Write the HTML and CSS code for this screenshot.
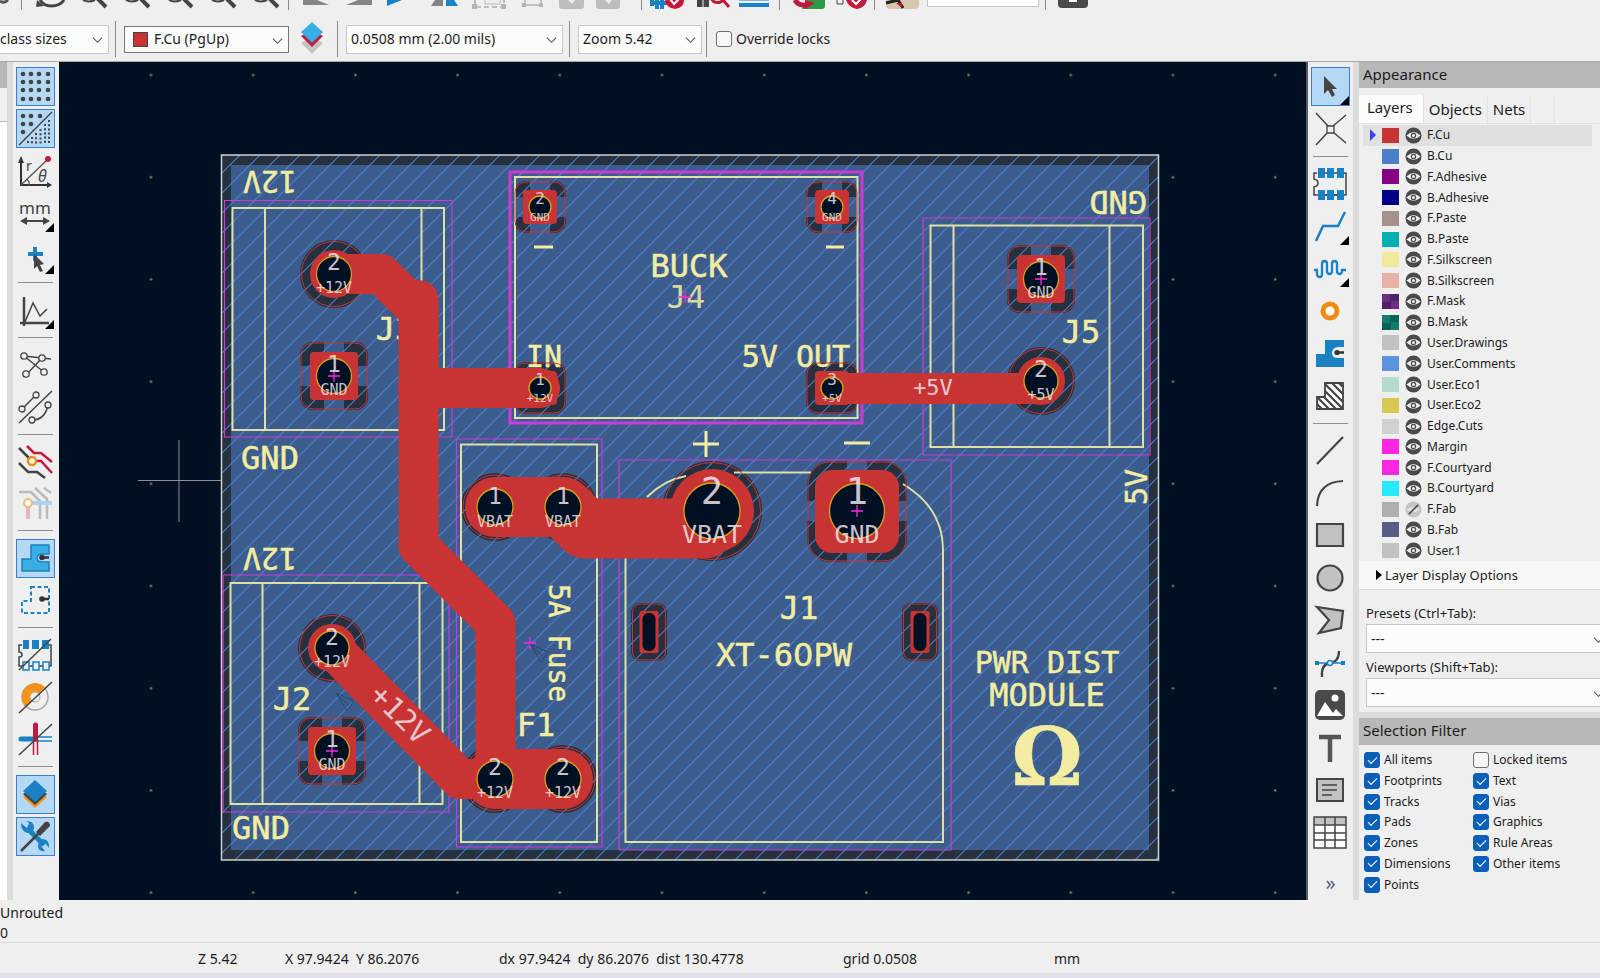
FILE: index.html
```html
<!DOCTYPE html>
<html lang="en">
<head>
<meta charset="utf-8">
<title>PCB Editor</title>
<link rel="stylesheet" href="styles.css">
</head>
<body>
<svg class="defs" aria-hidden="true">
  <defs>
    <symbol id="eye" viewBox="0 0 18 18"><circle cx="9" cy="9" r="8.5" fill="#4a4a4a"/><path d="M1.500 9Q9 1.500 16.500 9Q9 16 1.500 9Z" fill="#f2f2f2"/><circle cx="9" cy="9" r="2.900" fill="#4a4a4a"/><circle cx="9" cy="9" r="1.600" fill="#f2f2f2"/></symbol>
    <symbol id="eye-off" viewBox="0 0 18 18"><circle cx="9" cy="9" r="8.500" fill="#c4c4c4"/><path d="M2 9Q9 3 16 9Q9 15 2 9Z" fill="#e0e0e0"/><path d="M4 14L14 4" stroke="#444" stroke-width="1.600"/></symbol>
    <symbol id="chev" viewBox="0 0 12 8"><path d="M1 1.500L6 6.500L11 1.500" fill="none" stroke="#555" stroke-width="1.200"/></symbol>
    <symbol id="mag" viewBox="0 0 43 10"><path d="M12 0Q17 3 24 0" fill="none" stroke="#444" stroke-width="2"/><path d="M26 -2L35 7" stroke="#444" stroke-width="4"/></symbol>
    <symbol id="more" viewBox="0 0 9 9"><path d="M9 0V9H0Z" fill="#000"/></symbol>
  </defs>
</svg>

<header class="toolbars">
  <div class="bar-top">
    <button class="cut first" aria-label="Redo"><svg width="20" height="10"><path d="M0 1Q4 4 8 0" fill="none" stroke="#555" stroke-width="3"/></svg></button>
    <i class="vsep"></i>
    <button class="cut" aria-label="Refresh"><svg width="43" height="10"><path d="M12 0Q16 6 23 6Q32 6 36 0" fill="none" stroke="#444" stroke-width="3"/><path d="M8 7L9 0L16 6Z" fill="#444"/></svg></button>
    <button class="cut" aria-label="Zoom in"><svg width="43" height="10"><use href="#mag"/></svg></button>
    <button class="cut" aria-label="Zoom out"><svg width="43" height="10"><use href="#mag"/></svg></button>
    <button class="cut" aria-label="Zoom to fit"><svg width="43" height="10"><use href="#mag"/></svg></button>
    <button class="cut" aria-label="Zoom to objects"><svg width="43" height="10"><use href="#mag"/></svg></button>
    <button class="cut" aria-label="Zoom to selection"><svg width="43" height="10"><use href="#mag"/></svg></button>
    <i class="vsep"></i>
    <button class="cut" aria-label="Rotate left"><svg width="43" height="10"><path d="M8 0H22L34 5H8Z" fill="#858585"/></svg></button>
    <button class="cut" aria-label="Rotate right"><svg width="43" height="10"><path d="M34 0H20L8 5H34Z" fill="#858585"/></svg></button>
    <button class="cut" aria-label="Mirror"><svg width="43" height="10"><path d="M6 0H21L6 6Z" fill="#1a81c4"/></svg></button>
    <button class="cut" aria-label="Flip"><svg width="43" height="10"><path d="M11 0H19V6H7Z" fill="#858585"/><path d="M22 0H30L34 6H22Z" fill="#1a81c4"/></svg></button>
    <button class="cut" aria-label="Group"><svg width="43" height="10"><path d="M8 0V7H37V0" fill="none" stroke="#aaa" stroke-width="1.500" stroke-dasharray="5 3"/><path d="M18 0V4H33V0" fill="none" stroke="#bbb"/><path d="M5 4h5v5h-5zM34 4h5v5h-5z" fill="#b5b5b5"/></svg></button>
    <button class="cut" aria-label="Ungroup"><svg width="43" height="10"><path d="M15 0V5H31V0" fill="none" stroke="#b5b5b5" stroke-width="1.500"/><path d="M12 3h4v4h-4zM29 3h4v4h-4z" fill="#b5b5b5"/></svg></button>
    <button class="cut" aria-label="Lock"><svg width="43" height="10"><path d="M6 0H31V6Q31 9 28 9H9Q6 9 6 6Z" fill="#bdbdbd"/><path d="M15 0H22L19 4Z" fill="#eee"/></svg></button>
    <button class="cut" aria-label="Unlock"><svg width="43" height="10"><path d="M0 0H24V6Q24 9 21 9H3Q0 9 0 6Z" fill="#bdbdbd"/><path d="M9 0H16L13 4Z" fill="#eee"/></svg></button>
    <i class="vsep"></i>
    <button class="cut" aria-label="Footprint checker"><svg width="43" height="10"><path d="M4 0V6M9 0V9M14 0V9M4 3H34" stroke="#1a81c4" stroke-width="4"/><path d="M17 0H36Q36 8 27 9Q18 8 17 0Z" fill="#c31a3b"/><path d="M22 -1L26 4L33 -3" fill="none" stroke="#fff" stroke-width="2"/></svg></button>
    <button class="cut" aria-label="Find footprint"><svg width="43" height="10"><path d="M6 1H18M6 5H18" stroke="#444" stroke-width="4"/><path d="M12 0V8" stroke="#efefef"/><path d="M20 -2A7 7 0 0 0 32 0L38 7" fill="none" stroke="#c31a3b" stroke-width="3"/></svg></button>
    <button class="cut" aria-label="Net inspector"><svg width="43" height="10"><path d="M5 0H35" stroke="#1a81c4" stroke-width="1"/><path d="M5 5H35" stroke="#1a81c4" stroke-width="4"/></svg></button>
    <i class="vsep"></i>
    <button class="cut" aria-label="Update from schematic"><svg width="43" height="10"><path d="M20 0H39V6Q39 9 36 9H16Z" fill="#2f9a44"/><path d="M9 0Q12 6 20 5" fill="none" stroke="#c31a3b" stroke-width="5"/><path d="M19 0L29 3L19 9Z" fill="#c31a3b"/></svg></button>
    <button class="cut" aria-label="Design rules check"><svg width="43" height="10"><path d="M8 0V4H14V0" fill="none" stroke="#444"/><path d="M17 0Q20 8 28 9Q36 8 38 0Z" fill="#c31a3b"/><path d="M23 0L27 4L34 -3" fill="none" stroke="#fff" stroke-width="2"/></svg></button>
    <i class="vsep"></i>
    <button class="cut" aria-label="Scripting"><svg width="43" height="10"><path d="M5 0H38V5Q38 9 34 9H9Q5 9 5 5Z" fill="#d6c8aa"/><path d="M5 3L17 0L22 8" fill="none" stroke="#222" stroke-width="3"/><path d="M15 3L21 8V3Z" fill="#c31a3b"/></svg></button>
    <input class="cut-input" type="text" aria-label="Search">
    <i class="vsep"></i>
    <button class="cut" aria-label="Console"><svg width="43" height="10"><path d="M6 0H36V4Q36 8 32 8H10Q6 8 6 4Z" fill="#4a4a4a"/><path d="M17 1H25" stroke="#fff" stroke-width="2"/></svg></button>
  </div>
  <div class="bar-opts">
    <div class="combo c-track"><select aria-label="Track width"><option>class sizes</option></select><svg class="chev"><use href="#chev"/></svg></div>
    <i class="osep"></i>
    <div class="combo c-layer"><span class="layer-chip"></span><select aria-label="Active layer"><option>F.Cu (PgUp)</option></select><svg class="chev"><use href="#chev"/></svg></div>
    <button class="layer-pair" aria-label="Layer pair"><svg width="26" height="34" viewBox="0 0 26 34"><path d="M2 21L13 32L24 21L13 14Z" fill="#c4c4c4"/><path d="M2 14L13 25L24 14L13 8Z" fill="#c31a3b"/><path d="M13 0L24 10L13 21L2 10Z" fill="#38aee4"/></svg></button>
    <i class="osep"></i>
    <div class="combo c-grid"><select aria-label="Grid"><option>0.0508 mm (2.00 mils)</option></select><svg class="chev"><use href="#chev"/></svg></div>
    <i class="osep"></i>
    <div class="combo c-zoom"><select aria-label="Zoom"><option>Zoom 5.42</option></select><svg class="chev"><use href="#chev"/></svg></div>
    <i class="osep"></i>
    <label class="check lock"><input type="checkbox">Override locks</label>
  </div>
</header>

<main class="work">
  <aside class="left-pane"><div class="lp-head"></div><div class="lp-sub"></div></aside>
  <div class="splitter"></div>
  <nav class="tools left" aria-label="Display options">
    <button class="tool on" aria-label="Show grid"><svg viewBox="0 0 37 37"><g fill="#444"><g id="dotrow"><circle cx="6" cy="6" r="2.300"/><circle cx="14" cy="6" r="2.300"/><circle cx="22" cy="6" r="2.300"/><circle cx="31" cy="6" r="2.300"/></g><use href="#dotrow" y="8"/><use href="#dotrow" y="16"/><use href="#dotrow" y="25"/></g></svg></button>
    <button class="tool on" aria-label="Grid overrides"><svg viewBox="0 0 37 37"><g fill="#444"><circle cx="6" cy="6" r="2.300"/><circle cx="14" cy="6" r="2.300"/><circle cx="23" cy="6" r="2.300"/><circle cx="6" cy="14" r="2.300"/><circle cx="14" cy="14" r="2.300"/><circle cx="6" cy="22" r="2.300"/></g><path d="M2 35L35 2" stroke="#444" stroke-width="1.500"/><g stroke="#444" stroke-width="2" stroke-dasharray="2 2.200"><path d="M32 10V34M28 14V34M23.500 19V34M19 23V34M15 27V34M11 31V34"/></g></svg></button>
    <button class="tool" aria-label="Polar coordinates"><svg viewBox="0 0 37 37"><path d="M4 8V32H32" fill="none" stroke="#333" stroke-width="2"/><path d="M1 10L4 3L7 10ZM30 29L35 32L30 35Z" fill="#333"/><path d="M4 32L30 7M9 26Q13 28 12 32" stroke="#555" stroke-width="1.300" fill="none"/><circle cx="31" cy="6" r="3" fill="#c31a3b"/><text x="9" y="18" class="ic-t">r</text><text x="21" y="29" class="ic-t it">θ</text></svg></button>
    <button class="tool" aria-label="Millimetres"><svg viewBox="0 0 37 37"><text x="18" y="19" text-anchor="middle" class="ic-mm">mm</text><path d="M7 26H30" stroke="#444" stroke-width="2"/><path d="M3 26L10 22V30ZM33 26L26 22V30Z" fill="#444"/></svg><svg class="more"><use href="#more"/></svg></button>
    <button class="tool" aria-label="Cursor shape"><svg viewBox="0 0 37 37"><path d="M18 10V24M11 17H26" stroke="#1a81c4" stroke-width="4"/><path d="M17 17V32L20 29L23 35L26 34L23 28L27 27Z" fill="#444"/></svg><svg class="more"><use href="#more"/></svg></button>
    <i class="hsep"></i>
    <button class="tool" aria-label="Axes"><svg viewBox="0 0 37 37"><path d="M7 5V34M3 31H32" stroke="#444" stroke-width="2.500"/><path d="M8 30L16 11L23 24L30 17" fill="none" stroke="#444" stroke-width="1.500"/></svg><svg class="more"><use href="#more"/></svg></button>
    <i class="hsep"></i>
    <button class="tool" aria-label="Ratsnest"><svg viewBox="0 0 37 37"><path d="M7 10L28 27M9 29L25 12M7 10L34 13" stroke="#444" stroke-width="1.500"/><g fill="#efefef" stroke="#444" stroke-width="1.300"><circle cx="7" cy="10" r="3.200"/><circle cx="25" cy="12" r="3.200"/><circle cx="27" cy="26" r="3.200"/><circle cx="9" cy="28" r="3.200"/></g></svg></button>
    <button class="tool" aria-label="Curved ratsnest"><svg viewBox="0 0 37 37"><path d="M2 35L35 3M5 21L19 7M15 32Q28 32 31 17" fill="none" stroke="#444" stroke-width="1.500"/><g fill="#efefef" stroke="#444" stroke-width="1.300"><circle cx="19" cy="7" r="3"/><circle cx="5" cy="21" r="3"/><circle cx="31" cy="17" r="3"/><circle cx="15" cy="32" r="3"/></g></svg></button>
    <i class="hsep"></i>
    <button class="tool" aria-label="Net highlight"><svg viewBox="0 0 37 37"><path d="M2 5L14 17M2 20L11 29H20L28 35" fill="none" stroke="#444" stroke-width="2.500"/><path d="M10 3L17 10H24L35 19M17 18H24L35 30" fill="none" stroke="#c31a3b" stroke-width="2.500"/><circle cx="15" cy="18" r="4" fill="#fff" stroke="#f08c12" stroke-width="2.500"/></svg></button>
    <button class="tool" aria-label="Net colors"><svg viewBox="0 0 37 37" opacity=".5"><path d="M2 7H14L23 16V34M18 3L30 14V34M27 3L34 8" fill="none" stroke="#888" stroke-width="2.500"/><path d="M14 18H35" stroke="#6bb8ea" stroke-width="4"/><path d="M11 20V34" stroke="#e77a8e" stroke-width="4"/><circle cx="11" cy="18" r="4" fill="#fff" stroke="#f08c12" stroke-width="2"/></svg></button>
    <i class="hsep"></i>
    <button class="tool on" aria-label="Zone fills"><svg viewBox="0 0 37 37"><path d="M14 5H32V14H26Q20 14 20 18Q20 22 26 22H32V31H5V19H14Z" fill="#38aee4" stroke="#1a81c4" stroke-width="1.500"/><path d="M25 17.500H32" stroke="#333" stroke-width="2.500"/><circle cx="25" cy="17.500" r="2.800" fill="#333"/></svg></button>
    <button class="tool" aria-label="Zone outlines"><svg viewBox="0 0 37 37"><path d="M14 5H32V31H5V19H14Z" fill="none" stroke="#1a81c4" stroke-width="2" stroke-dasharray="4 2.500"/><path d="M25 17H32" stroke="#333" stroke-width="2.500"/><circle cx="25" cy="17" r="2.800" fill="#333"/></svg></button>
    <i class="hsep"></i>
    <button class="tool" aria-label="Pads sketch"><svg viewBox="0 0 37 37"><path d="M5 8H2V15Q5 15 5 18Q5 20 2 20V29H34V8H31" fill="none" stroke="#444" stroke-width="1.500"/><path d="M6 3h6v9h-6zM15 3h7v9h-7zM25 3h7v9h-7z" fill="#1a81c4"/><path d="M6 25h6v8h-6zM16 25h6v8h-6zM26 25h6v8h-6z" fill="#efefef" stroke="#1a81c4" stroke-width="1.500"/><path d="M2 33L34 2" stroke="#444" stroke-width="1.500"/></svg></button>
    <button class="tool" aria-label="Vias sketch"><svg viewBox="0 0 37 37"><circle cx="18" cy="18" r="13" fill="#efefef" stroke="#aaa" stroke-width="1.500"/><path d="M9 28A13.500 13.500 0 0 1 28 8Z" fill="#f7931a"/><circle cx="18" cy="18" r="5" fill="#efefef" stroke="#aaa"/><path d="M2 34L35 3" stroke="#444" stroke-width="1.500"/></svg></button>
    <button class="tool" aria-label="Tracks sketch"><svg viewBox="0 0 37 37"><path d="M4 18H18" stroke="#1a81c4" stroke-width="5" stroke-linecap="round"/><path d="M18 16H35M18 20H35" stroke="#1a81c4" stroke-width="1.500"/><path d="M18.500 4V18" stroke="#c31a3b" stroke-width="5" stroke-linecap="round"/><path d="M16.500 18V34M20.500 18V34" stroke="#c31a3b" stroke-width="1.500"/><path d="M2 34L35 3" stroke="#444" stroke-width="1.500"/></svg></button>
    <i class="hsep"></i>
    <button class="tool on" aria-label="Layers manager"><svg viewBox="0 0 37 37"><path d="M6 21L18 32L30 21L18 14Z" fill="#f7931a"/><path d="M6 18L18 29L30 18L18 10Z" fill="#444"/><path d="M18 4L30 15L18 26L6 15Z" fill="#1a81c4"/></svg></button>
    <button class="tool on" aria-label="Properties manager"><svg viewBox="0 0 37 37"><path d="M12 12L27 27" stroke="#1a81c4" stroke-width="5"/><path d="M4 5L10 10L12 5L9 3Q17 3 17 9Q17 15 11 15Q4 14 4 5ZM32 30L28 25L24 28L28 33Q21 34 21 28Q21 22 26 21Q33 22 32 30Z" fill="#1a81c4"/><path d="M4 33L22 15" stroke="#444" stroke-width="2.500"/><path d="M19 14L28 4Q33 3 33 8L23 18Z" fill="#444"/></svg></button>
  </nav>

  <section class="canvas" aria-label="Board">
    <svg viewBox="59 62 1247 838">
      <defs>
        <pattern id="grid" x="100" y="24" width="102.200" height="102.200" patternUnits="userSpaceOnUse"><circle cx="51" cy="51" r="1.200" fill="#9a8560"/></pattern>
        <pattern id="hatch" x="15" y="0" width="20" height="20" patternUnits="userSpaceOnUse"><path d="M-1 21L21 -1M-1 1L1 -1M19 21L21 19" stroke="#4c80c8" stroke-width="1.100"/></pattern>
        <g id="clr-sq"><rect x="-34" y="-34" width="68" height="68" rx="13" fill="#26303e"/><path d="M-34 0H34M0 -34V34" stroke="#3b5c8c" stroke-width="20"/></g>
        <g id="pad-sq"><rect x="-33" y="-33" width="66" height="66" rx="12" class="ring"/><rect x="-24" y="-24" width="48" height="48" rx="4" class="cu"/><circle r="17.500" class="hole"/></g>
        <g id="pad-rd"><circle r="32.500" class="ring"/><circle r="24" class="cu"/></g>
        <g id="clr-sm"><rect x="-26" y="-26" width="52" height="52" rx="12" fill="#26303e"/></g>
        <g id="clr-sm-t"><use href="#clr-sm"/><path d="M-26 0H26M0 -26V26" stroke="#3b5c8c" stroke-width="20"/></g>
        <g id="pad-sm"><rect x="-25" y="-25" width="50" height="50" rx="11" class="ring"/><rect x="-17" y="-17" width="34" height="34" rx="4" class="cu"/><circle r="11" class="hole"/></g>
        <g id="slot"><rect x="-9.500" y="-21" width="19" height="42" rx="2" class="cu"/><rect x="-6.500" y="-19" width="13" height="38" rx="6" fill="#001023"/><rect x="-16.500" y="-28" width="33" height="56" rx="8" class="ring"/></g>
        <path id="cross" d="M-6 0H6M0 -6V6" class="mark"/>
        <path id="ghost" d="M0 0L18 8L11 18ZM0 0L12 12" class="ghost"/>
      </defs>
      <rect x="59" y="62" width="1247" height="838" fill="url(#grid)"/>
      <path d="M138 480.500H222M179 440V522" stroke="#8f9097" stroke-width="1"/>

      <rect x="221.500" y="155" width="937" height="705" fill="#26303e"/>
      <rect x="231" y="165" width="918" height="685" fill="#3b5c8c"/>

      <g class="clear">
        <circle cx="334" cy="274" r="34"/><circle cx="332" cy="648" r="34"/>
        <circle cx="1041" cy="381" r="34"/><circle cx="712" cy="511" r="50"/>
        <circle cx="495" cy="507" r="34"/><circle cx="563" cy="507" r="34"/>
        <circle cx="495" cy="779" r="34"/><circle cx="563" cy="779" r="34"/>
        <rect x="807" y="461" width="100" height="101" rx="24"/>
        <rect x="631" y="603" width="36" height="58" rx="9"/><rect x="902" y="603" width="36" height="58" rx="9"/>
      </g>
      <path d="M857 461V562M807 511H907" stroke="#3b5c8c" stroke-width="20"/>
      <use href="#clr-sq" x="334" y="376"/><use href="#clr-sq" x="332" y="751"/><use href="#clr-sq" x="1041" y="279"/>
      <use href="#clr-sm-t" x="540" y="207"/><use href="#clr-sm-t" x="832" y="207"/>
      <use href="#clr-sm" x="540" y="388"/><use href="#clr-sm" x="832" y="388"/>
      <rect x="222" y="155" width="937" height="705" fill="url(#hatch)"/>
      <rect x="221.500" y="155" width="937" height="705" class="edge"/>

      <g class="silk">
        <path d="M232.500 208H444V430H232.500ZM265 208V430M421.500 208V430"/>
        <path d="M230.500 583H442.500V804H230.500ZM262.500 583V804M419.500 583V804"/>
        <path d="M515 177H857.500V418H515Z"/>
        <path d="M930.500 225.500H1143V447H930.500ZM953.500 225.500V447M1109.500 225.500V447"/>
        <path d="M461 444.500H597V842H461Z"/>
        <path d="M647 497Q664 480 686 476M734 472.500H811M903 484Q943 508 943 550V842H625.500V550"/>
        <path d="M534 247H553M826 247H844M844 443H870M693 444H719M706 431V457" class="sign"/>
      </g>
      <g class="yard">
        <path d="M224.500 200.500H452V437H224.500ZM223 575H449V812H223ZM923 218H1150V455H923ZM456.500 439H602V847H456.500ZM619 460H951V850H619Z"/>
        <path d="M510 172H862V423H510Z" class="thick"/>
      </g>
      <g class="st">
        <text x="270" y="183" transform="rotate(180 270 183)" dy="12" class="n">12V</text>
        <text x="270" y="560" transform="rotate(180 270 560)" dy="12" class="n">12V</text>
        <text x="270" y="469">GND</text>
        <text x="261" y="839">GND</text>
        <text x="1118" y="203" transform="rotate(180 1118 203)" dy="12">GND</text>
        <text x="1136" y="487" transform="rotate(-90 1136 487)" dy="11" class="n">5V</text>
        <text x="395" y="340">J3</text>
        <text x="292" y="710">J2</text>
        <text x="1081" y="343">J5</text>
        <text x="799" y="619">J1</text>
        <text x="536" y="736">F1</text>
        <text x="544" y="367" class="n">IN</text>
        <text x="689" y="277">BUCK</text>
        <text x="686" y="308" class="thin">J4</text>
        <text x="796" y="367" class="n">5V OUT</text>
        <text x="560" y="643" transform="rotate(90 560 643)" dy="11" class="f">5A Fuse</text>
        <text x="784" y="666">XT-6<tspan class="zero">0</tspan>PW</text>
        <text x="1047" y="673" class="n">PWR DIST</text>
        <text x="1047" y="706">MODULE</text>
        <text x="1047" y="785" class="omega">Ω</text>
      </g>

      <use href="#pad-rd" x="334" y="274"/><use href="#pad-rd" x="332" y="648"/><use href="#pad-rd" x="1041" y="381"/>
      <g class="ring"><circle cx="495" cy="507" r="32"/><circle cx="563" cy="507" r="32"/><circle cx="495" cy="779" r="32"/><circle cx="563" cy="779" r="32"/><circle cx="712" cy="511" r="48.500"/><rect x="808" y="462" width="98" height="99" rx="22"/></g>
      <circle cx="712" cy="511" r="42" class="cu"/>
      <rect x="815" y="470" width="84" height="83" rx="17" class="cu"/>
      <use href="#pad-sq" x="334" y="376"/><use href="#pad-sq" x="332" y="751"/><use href="#pad-sq" x="1041" y="279"/>
      <use href="#pad-sm" x="540" y="207"/><use href="#pad-sm" x="832" y="207"/>
      <use href="#pad-sm" x="540" y="388"/><use href="#pad-sm" x="832" y="388"/>
      <use href="#slot" x="649" y="632"/><use href="#slot" x="920" y="632"/>
      <g class="track">
        <path d="M334 274H381L418.500 311" stroke-width="40"/>
        <path d="M418.500 300V546L495.500 623V779" stroke-width="40"/>
        <path d="M418 388H540" stroke-width="40"/>
        <path d="M332 648L460 779H495" stroke-width="40"/>
        <path d="M495 779H563M495 507H563L585 528.500H705" stroke-width="60"/>
        <path d="M832 388.500H1034" stroke-width="31"/>
      </g>
      <g class="hole">
        <circle cx="334" cy="274" r="17.500"/><circle cx="332" cy="648" r="17"/><circle cx="1041" cy="381" r="17"/>
        <circle cx="495" cy="507" r="18"/><circle cx="563" cy="507" r="18"/><circle cx="495" cy="779" r="18"/><circle cx="563" cy="779" r="18"/>
        <circle cx="712" cy="511" r="28"/><circle cx="857" cy="511" r="27.500"/><circle cx="540" cy="388" r="11"/><circle cx="832" cy="388" r="11"/>
      </g>
      <use href="#cross" x="334" y="376"/><use href="#cross" x="332" y="751"/><use href="#cross" x="1041" y="279"/><use href="#cross" x="857" y="511"/><use href="#cross" x="685" y="297"/><use href="#cross" x="530" y="643"/>
      <use href="#ghost" x="336" y="693"/><use href="#ghost" x="530" y="644"/>

      <g class="pn">
        <g class="num"><text x="334" y="270">2</text><text x="334" y="372">1</text><text x="332" y="645">2</text><text x="332" y="747">1</text><text x="1041" y="275">1</text><text x="1041" y="377">2</text><text x="495" y="504">1</text><text x="563" y="504">1</text><text x="495" y="775">2</text><text x="563" y="775">2</text></g>
        <g class="net"><text x="334" y="293">+12V</text><text x="334" y="395">GND</text><text x="332" y="667">+12V</text><text x="332" y="770">GND</text><text x="1041" y="298">GND</text><text x="1041" y="400">+5V</text><text x="495" y="527">VBAT</text><text x="563" y="527">VBAT</text><text x="495" y="798">+12V</text><text x="563" y="798">+12V</text></g>
        <g class="num-s"><text x="540" y="204">2</text><text x="832" y="204">4</text><text x="540" y="385">1</text><text x="832" y="385">3</text></g>
        <g class="net-s"><text x="540" y="221">GND</text><text x="832" y="221">GND</text><text x="540" y="402">+12V</text><text x="832" y="402">+5V</text></g>
        <g class="num-l"><text x="712" y="504">2</text><text x="857" y="504">1</text></g>
        <g class="net-l"><text x="712" y="543">VBAT</text><text x="857" y="543">GND</text></g>
        <text x="933" y="395" class="tr">+5V</text>
        <text x="400" y="714" transform="rotate(45 400 714)" dy="10" class="tr-l">+12V</text>
      </g>
    </svg>
  </section>

  <nav class="tools right" aria-label="Editing tools">
    <button class="tool on" aria-label="Select"><svg viewBox="0 0 37 37"><path d="M12 8V26L16 22L20 29L23 27L20 21H25Z" fill="#444"/></svg><svg class="more"><use href="#more"/></svg></button>
    <button class="tool" aria-label="Local ratsnest"><svg viewBox="0 0 37 37"><path d="M4 3L16 16M34 5L21 16M4 35L16 22M34 33L21 22" stroke="#444" stroke-width="1.500"/><path d="M15 16H22V23H15Z" fill="#efefef" stroke="#444" stroke-width="1.300"/></svg></button>
    <i class="hsep"></i>
    <button class="tool" aria-label="Place footprint"><svg viewBox="0 0 37 37"><path d="M5 8H2V14Q6 15 6 18Q6 21 2 22V30H34V8H31" fill="none" stroke="#444" stroke-width="1.500"/><path d="M12 8H16M22 8H26M12 30H16M22 30H26" stroke="#444" stroke-width="1.500"/><path d="M6 3h7v10h-7zM15 3h7v10h-7zM25 3h7v10h-7zM6 25h7v10h-7zM15 25h7v10h-7zM25 25h7v10h-7z" fill="#1a81c4"/></svg></button>
    <button class="tool" aria-label="Route track"><svg viewBox="0 0 37 37"><path d="M4 33L11 18H26L33 4" fill="none" stroke="#1a81c4" stroke-width="2.500"/></svg><svg class="more"><use href="#more"/></svg></button>
    <button class="tool" aria-label="Tune length"><svg viewBox="0 0 37 37"><path d="M2 20H5V24Q5 27 8 27Q10 27 10 24V14Q10 11 12.500 11Q15 11 15 14V21Q15 24 17.500 24Q20 24 20 21V14Q20 11 22.500 11Q25 11 25 14V21Q25 24 28 24Q30 24 30 20H34" fill="none" stroke="#1a81c4" stroke-width="2.300"/></svg><svg class="more"><use href="#more"/></svg></button>
    <button class="tool" aria-label="Place via"><svg viewBox="0 0 37 37"><circle cx="18" cy="18" r="7" fill="#fff" stroke="#f08c12" stroke-width="5"/></svg></button>
    <button class="tool" aria-label="Add zone"><svg viewBox="0 0 37 37"><path d="M13 5H32V12H26Q20 13 20 18Q20 23 26 23H32V32H4V19H13Z" fill="#1a81c4"/><path d="M25 17.500H32" stroke="#333" stroke-width="2.500"/><circle cx="25" cy="17.500" r="2.600" fill="#333"/></svg></button>
    <button class="tool" aria-label="Rule area"><svg viewBox="0 0 37 37"><path d="M13 5H31V31H5V19H13Z" fill="#fff" stroke="#444" stroke-width="1.800"/><path d="M13 6L31 24M13 13L31 31M20 5L31 16M12 19L24 31M27 5L31 9M5 19L17 31M5 26L10 31" stroke="#444" stroke-width="2.200"/></svg></button>
    <i class="hsep"></i>
    <button class="tool" aria-label="Line"><svg viewBox="0 0 37 37"><path d="M5 32L31 5" stroke="#444" stroke-width="2.200"/></svg></button>
    <button class="tool" aria-label="Arc"><svg viewBox="0 0 37 37"><path d="M5 31Q6 7 31 6" fill="none" stroke="#444" stroke-width="2.200"/></svg></button>
    <button class="tool" aria-label="Rectangle"><svg viewBox="0 0 37 37"><path d="M5 7H31V29H5Z" fill="#c2c2c2" stroke="#444" stroke-width="2.200"/></svg></button>
    <button class="tool" aria-label="Circle"><svg viewBox="0 0 37 37"><circle cx="18" cy="18" r="12.500" fill="#c2c2c2" stroke="#444" stroke-width="2.200"/></svg></button>
    <button class="tool" aria-label="Polygon"><svg viewBox="0 0 37 37"><path d="M5 5L31 9L29 26L7 31L17 18Z" fill="#c2c2c2" stroke="#444" stroke-width="2.200"/></svg></button>
    <button class="tool" aria-label="Bezier"><svg viewBox="0 0 37 37"><path d="M10 32Q9 19 18 18Q27 17 27 6" fill="none" stroke="#444" stroke-width="2.300"/><path d="M5 18H31" stroke="#1a81c4" stroke-width="1.500"/><path d="M3 16h4v4h-4zM29 16h4v4h-4z" fill="#1a81c4"/><circle cx="18" cy="18" r="2.500" fill="#fff" stroke="#1a81c4" stroke-width="1.500"/></svg></button>
    <button class="tool" aria-label="Image"><svg viewBox="0 0 37 37"><rect x="3" y="3" width="30" height="30" rx="5" fill="#4a4a4a"/><path d="M5 29L13 15L21 26L24 22L31 29Z" fill="#fff"/><circle cx="23" cy="11" r="3.500" fill="#fff"/></svg></button>
    <button class="tool" aria-label="Text"><svg viewBox="0 0 37 37"><path d="M7 8H29M18 8V33" stroke="#555" stroke-width="4.500"/></svg></button>
    <button class="tool" aria-label="Text box"><svg viewBox="0 0 37 37"><path d="M5 7H31V29H5Z" fill="#c2c2c2" stroke="#444" stroke-width="2"/><path d="M10 13H25M10 18H25M10 23H20" stroke="#444" stroke-width="1.500"/></svg></button>
    <button class="tool" aria-label="Table"><svg viewBox="0 0 37 37"><path d="M2 3H34V34H2Z" fill="#fff"/><path d="M2 3H34V11H2Z" fill="#c2c2c2"/><path d="M2 3H34V34H2ZM2 11H34M2 19H34M2 26H34M13 3V34M23 3V34" fill="none" stroke="#444" stroke-width="1.500"/></svg></button>
    <button class="overflow" aria-label="More tools">»</button>
  </nav>
  <div class="splitter"></div>

  <aside class="panel">
    <h2>Appearance</h2>
    <div class="tabs" role="tablist"><button role="tab" aria-selected="true">Layers</button><button role="tab">Objects</button><button role="tab">Nets</button><span></span></div>
    <ul class="layers">
      <li class="sel"><button class="sw l1" aria-label="F.Cu color"></button><svg><use href="#eye"/></svg>F.Cu</li>
      <li><button class="sw l2" aria-label="B.Cu color"></button><svg><use href="#eye"/></svg>B.Cu</li>
      <li><button class="sw l3" aria-label="F.Adhesive color"></button><svg><use href="#eye"/></svg>F.Adhesive</li>
      <li><button class="sw l4" aria-label="B.Adhesive color"></button><svg><use href="#eye"/></svg>B.Adhesive</li>
      <li><button class="sw l5" aria-label="F.Paste color"></button><svg><use href="#eye"/></svg>F.Paste</li>
      <li><button class="sw l6" aria-label="B.Paste color"></button><svg><use href="#eye"/></svg>B.Paste</li>
      <li><button class="sw l7" aria-label="F.Silkscreen color"></button><svg><use href="#eye"/></svg>F.Silkscreen</li>
      <li><button class="sw l8" aria-label="B.Silkscreen color"></button><svg><use href="#eye"/></svg>B.Silkscreen</li>
      <li><button class="sw l9" aria-label="F.Mask color"></button><svg><use href="#eye"/></svg>F.Mask</li>
      <li><button class="sw l10" aria-label="B.Mask color"></button><svg><use href="#eye"/></svg>B.Mask</li>
      <li><button class="sw l11" aria-label="User.Drawings color"></button><svg><use href="#eye"/></svg>User.Drawings</li>
      <li><button class="sw l12" aria-label="User.Comments color"></button><svg><use href="#eye"/></svg>User.Comments</li>
      <li><button class="sw l13" aria-label="User.Eco1 color"></button><svg><use href="#eye"/></svg>User.Eco1</li>
      <li><button class="sw l14" aria-label="User.Eco2 color"></button><svg><use href="#eye"/></svg>User.Eco2</li>
      <li><button class="sw l15" aria-label="Edge.Cuts color"></button><svg><use href="#eye"/></svg>Edge.Cuts</li>
      <li><button class="sw l16" aria-label="Margin color"></button><svg><use href="#eye"/></svg>Margin</li>
      <li><button class="sw l16" aria-label="F.Courtyard color"></button><svg><use href="#eye"/></svg>F.Courtyard</li>
      <li><button class="sw l18" aria-label="B.Courtyard color"></button><svg><use href="#eye"/></svg>B.Courtyard</li>
      <li><button class="sw l19" aria-label="F.Fab color"></button><svg><use href="#eye-off"/></svg>F.Fab</li>
      <li><button class="sw l20" aria-label="B.Fab color"></button><svg><use href="#eye"/></svg>B.Fab</li>
      <li><button class="sw l11" aria-label="User.1 color"></button><svg><use href="#eye"/></svg>User.1</li>
    </ul>
    <button class="disclose"><svg width="6" height="10"><path d="M0 0L6 5L0 10Z"/></svg>Layer Display Options</button>
    <div class="fields">
      <label for="presets">Presets (Ctrl+Tab):</label>
      <div class="combo wide"><select id="presets"><option>---</option></select><svg class="chev"><use href="#chev"/></svg></div>
      <label for="views">Viewports (Shift+Tab):</label>
      <div class="combo wide"><select id="views"><option>---</option></select><svg class="chev"><use href="#chev"/></svg></div>
    </div>
    <h2 class="sf">Selection Filter</h2>
    <div class="filter">
      <label class="check"><input type="checkbox" checked>All items</label><label class="check"><input type="checkbox">Locked items</label>
      <label class="check"><input type="checkbox" checked>Footprints</label><label class="check"><input type="checkbox" checked>Text</label>
      <label class="check"><input type="checkbox" checked>Tracks</label><label class="check"><input type="checkbox" checked>Vias</label>
      <label class="check"><input type="checkbox" checked>Pads</label><label class="check"><input type="checkbox" checked>Graphics</label>
      <label class="check"><input type="checkbox" checked>Zones</label><label class="check"><input type="checkbox" checked>Rule Areas</label>
      <label class="check"><input type="checkbox" checked>Dimensions</label><label class="check"><input type="checkbox" checked>Other items</label>
      <label class="check"><input type="checkbox" checked>Points</label>
    </div>
  </aside>
</main>

<footer>
  <div class="info"><span>Unrouted</span><span>0</span></div>
  <div class="status"><span class="s1">Z 5.42</span><span class="s2">X 97.9424&nbsp; Y 86.2076</span><span class="s3">dx 97.9424&nbsp; dy 86.2076&nbsp; dist 130.4778</span><span class="s4">grid 0.0508</span><span>mm</span></div>
</footer>
</body>
</html>
```

FILE: styles.css
```css
* { box-sizing: border-box; }
body {
  margin: 0;
  height: 100vh;
  display: flex;
  flex-direction: column;
  overflow: hidden;
  background: #efefef;
  color: #1c1c1c;
  font: 14px/20px "Noto Sans", "Open Sans", sans-serif;
}
button, select, input { font: inherit; color: inherit; margin: 0; }
button { border: 0; padding: 0; background: none; }
svg { display: block; }
.defs { position: absolute; width: 0; height: 0; }

/* top toolbars */
.toolbars { flex: none; border-bottom: 1px solid #a9a9a9; }
.bar-top { display: flex; height: 10px; overflow: hidden; }
.cut { width: 43px; height: 10px; flex: none; }
.cut.first { width: 19px; }
.vsep { width: 1px; margin: 0 6px 0 2px; background: #8a8a8a; flex: none; }
.cut-input { width: 112px; height: 7px; margin: 0 4px 0 3px; border: 1px solid #c4c4c4; border-top: 0; background: #fff; padding: 0; }
.bar-opts { display: flex; align-items: center; height: 51px; padding-top: 7px; }
.osep { width: 1px; height: 36px; margin: 0 8px 0 6px; background: #8a8a8a; }
.combo { position: relative; display: flex; align-items: center; height: 29px; background: #fcfcfc; border: 1px solid #c8c8c8; }
.combo select { appearance: none; border: 0; background: none; flex: 1; min-width: 0; height: 100%; padding: 0 24px 0 4px; font-size: 14px; outline: none; }
.chev { position: absolute; right: 5px; top: 10px; width: 11px; height: 8px; pointer-events: none; }
.c-track { width: 109px; border-left: 0; }
.c-track select { padding-left: 0; }
.c-layer { width: 165px; border-color: #777; height: 27px; }
.layer-chip { width: 15px; height: 15px; margin: 0 2px 0 8px; background: #c83434; border: 1px solid #444; }
.layer-pair { margin: 0 6px 0 10px; }
.c-grid { width: 217px; }
.c-zoom { width: 124px; margin-right: -2px; }
.lock { margin-left: 1px; }

.check { display: flex; align-items: center; gap: 4px; }
.check input { appearance: none; width: 16px; height: 16px; border: 1px solid #6e6e6e; border-radius: 3px; background: #f8f8f8; display: grid; place-items: center; flex: none; }
.check input:checked { background: #0a5fb8; border-color: #0a5fb8; }
.check input:checked::after { content: ""; width: 8px; height: 4px; border: solid #fff; border-width: 0 0 1px 1px; transform: rotate(-45deg) translate(1px, -1px); }

/* work area */
.work { flex: 1; display: flex; min-height: 0; }
.left-pane { width: 7px; background: #fff; }
.lp-head { height: 26px; background: #b8b8b8; }
.lp-sub { height: 34px; background: #efefef; border-bottom: 1px solid #bbb; }
.splitter { width: 6px; background: #dcdcdc; flex: none; }
.tools { flex: none; display: flex; flex-direction: column; justify-content: space-between; align-items: center; width: 46px; padding: 5px 0 44px; }
.tools.left { padding-right: 2px; }
.tools.right { width: 47px; padding-bottom: 5px; border-left: 2px solid #5b5666; }
.tool { position: relative; width: 39px; height: 39px; border: 1px solid transparent; flex: none; }
.tool > svg:first-child { width: 37px; height: 37px; }
.tool.on { background: #b5d8f5; border-color: #3a80cf; }
.more { position: absolute; right: 0; bottom: 0; width: 9px; height: 9px; }
.hsep { width: 35px; height: 1px; margin: 4px 0; background: #8d8d8d; flex: none; }
.overflow { font-size: 20px; line-height: 24px; color: #5a5a86; margin-top: 15px; }
.ic-t { font: 14px "Noto Sans", sans-serif; fill: #444; }
.it { font-style: italic; font-size: 16px; }
.ic-mm { font: 17px "Noto Sans", sans-serif; fill: #444; }

/* board */
.canvas { flex: 1; min-width: 0; background: #001023; }
.canvas svg { width: 100%; height: 100%; }
.clear { fill: #26303e; }
.edge { fill: none; stroke: #d0d2cd; stroke-width: 1.5; }
.silk { fill: none; stroke: #dfe0a6; stroke-width: 2; }
.sign { stroke: #f2eda1; stroke-width: 3; }
.yard { fill: none; stroke: #cb3bd6; stroke-width: 1.2; }
.thick { stroke-width: 3; }
.ring { fill: none; stroke: #c83434; stroke-width: 1; }
.cu { fill: #c83434; }
.track { fill: none; stroke: #c83434; stroke-linecap: round; stroke-linejoin: round; }
.hole { fill: #001023; stroke: #d8a020; stroke-width: 1.3; }
.mark { stroke: #ff26e2; stroke-width: 1.3; fill: none; }
.ghost { stroke: #2a4670; stroke-width: 1; fill: none; }
.st, .pn { font-family: "DejaVu Sans Mono", monospace; text-anchor: middle; }
.st { fill: #f2eda1; stroke: #f2eda1; stroke-width: .5; font-size: 32px; }
.st .n { font-size: 30px; }
.st .f { font-size: 28px; }
.st .thin { fill: #d9d9a0; stroke: none; }
.zero { font-family: "DejaVu Sans", sans-serif; }
.st .omega { font: bold 80px "DejaVu Serif", serif; }
.pn { fill: #f0e4ea; fill-opacity: .85; }
.num { font-size: 23px; }
.net { font-size: 15px; }
.num-s { font-size: 16px; }
.net-s { font-size: 11px; }
.num-l { font-size: 37px; }
.net-l { font-size: 25px; }
.tr { font-size: 22px; }
.tr-l { font-size: 29px; }

/* right panel */
.panel { width: 241px; flex: none; overflow: hidden; display: flex; flex-direction: column; }
h2 { margin: 0; font-size: 15px; line-height: 24px; padding: 0 0 2px 4px; font-weight: 400; background: #b8b8b8; flex: none; }
.tabs { display: flex; margin-top: 7px; height: 29px; border-bottom: 1px solid #e2e2e2; flex: none; }
.tabs button { font-size: 15px; padding: 0 5px; border-right: 1px solid #e2e2e2; }
.tabs button[aria-selected] { background: #fcfcfc; padding: 0 10px 4px 8px; }
.tabs span { width: 24px; border-right: 1px solid #e2e2e2; }
.layers { list-style: none; margin: 1px 8px 0 4px; padding: 0; height: 436px; flex: none; display: grid; grid-auto-rows: 1fr; font-size: 12px; }
.layers li { display: flex; align-items: center; padding-left: 19px; position: relative; }
.layers li.sel { background: #e0e0e0; }
.layers li.sel::before { content: ""; position: absolute; left: 7px; border: solid transparent; border-width: 6px 0 6px 6px; border-left-color: #3640ff; }
.layers svg { width: 17px; height: 17px; margin: 0 5px 0 6px; }
.sw { width: 17px; height: 15px; }
.l1 { background: #c83434; } .l2 { background: #4d7fc4; } .l3 { background: #840084; }
.l4 { background: #000084; } .l5 { background: #a59090; } .l6 { background: #00b0ac; }
.l7 { background: #f0eb9a; } .l8 { background: #e8b2a7; }
.l9 { background: conic-gradient(#4e2265 25%, #6b2d86 0 50%, #4e2265 0 75%, #6b2d86 0); }
.l10 { background: conic-gradient(#05655a 25%, #0f7c6c 0 50%, #05655a 0 75%, #0f7c6c 0); }
.l11 { background: #c2c2c2; } .l12 { background: #5994dc; } .l13 { background: #b4dbd2; }
.l14 { background: #d8c852; } .l15 { background: #d0d2cd; } .l16 { background: #ff26e2; }
.l18 { background: #26e9ff; } .l19 { background: #afafaf; } .l20 { background: #585d84; }
.disclose { height: 29px; flex: none; display: flex; align-items: center; gap: 3px; padding-left: 17px; background: #f8f8f8; border-bottom: 1px solid #dedede; font-size: 13px; }
.fields { display: flex; flex-direction: column; font-size: 13px; padding: 13px 0 1px 7px; flex: none; }
.fields .combo { margin: 1px -10px 4px 0; }
.fields .chev { top: 11px; }
h2.sf { border-top: 6px solid #dcdcdc; padding-bottom: 3px; }
.filter { display: grid; grid-template-columns: 109px 1fr; grid-auto-rows: 1fr; height: 150px; flex: none; padding: 5px 0 0 5px; font-size: 12px; }

/* bottom */
footer { height: 78px; flex: none; border-bottom: 5px solid #e2e0ea; display: flex; flex-direction: column; }
.info { height: 43px; border-bottom: 1px solid #dcdcdc; padding-top: 3px; display: flex; flex-direction: column; }
.status { flex: 1; display: flex; align-items: center; padding: 2px 0 0 198px; }
.s1 { width: 87px; } .s2 { width: 214px; } .s3 { width: 344px; } .s4 { width: 211px; }
```
